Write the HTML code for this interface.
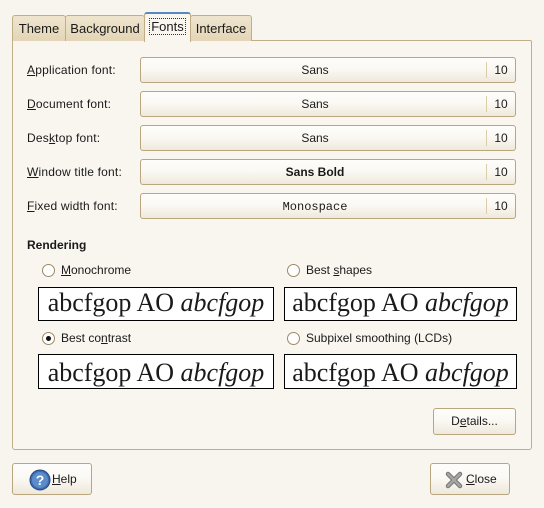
<!DOCTYPE html>
<html><head><style>
*{box-sizing:border-box;margin:0;padding:0}
body{width:544px;height:508px;background:#f8f5ef;font-family:"Liberation Sans",sans-serif;font-size:12px;color:#1a1a1a;position:relative;overflow:hidden}
.a{position:absolute}
.tab{position:absolute;top:15px;height:26px;border:1px solid #c2ae86;border-bottom:none;border-radius:3px 3px 0 0;background:linear-gradient(#efe5cf,#e3d5b6);text-align:center;line-height:26px;font-size:13px}
.panel{position:absolute;left:12px;top:40px;width:520px;height:410px;border:1px solid #c2ae86;border-radius:0 2px 3px 3px;background:#f9f6f0}
.btn{position:absolute;border:1px solid #b9a67f;border-radius:3px;background:linear-gradient(#fefdfb 0%,#fbf9f4 45%,#efe9dc 100%);text-align:center;font-size:12px}
.lbl{position:absolute;left:27px;font-size:12px;letter-spacing:0.2px}
.num{position:absolute;right:0;top:4px;width:29px;height:16px;border-left:1px solid #dccdaa;line-height:16px;text-align:center}
.radio{position:absolute;width:13px;height:13px;border:1px solid #9c8a66;border-radius:50%;background:#fff}
.prev{position:absolute;border:1px solid #000;background:#fff;font-family:"Liberation Serif",serif;font-size:26px;text-align:center;line-height:30px;white-space:nowrap}
u{text-decoration:underline}
</style></head><body>
<div class="panel"></div>
<div class="tab" style="left:12px;width:54px">Theme</div>
<div class="tab" style="left:65px;width:80px">Background</div>
<div class="tab" style="left:190px;width:62px">Interface</div>
<div class="tab" style="left:144px;top:12px;width:47px;height:30px;background:#f9f6f0;border-top:2px solid #5a87c2;line-height:26px"><span style="border:1px dotted #333;padding:0 1px">Fonts</span></div>

<div class="lbl" style="top:63px"><u>A</u>pplication font:</div>
<div class="lbl" style="top:97px"><u>D</u>ocument font:</div>
<div class="lbl" style="top:131px">Des<u>k</u>top font:</div>
<div class="lbl" style="top:165px"><u>W</u>indow title font:</div>
<div class="lbl" style="top:199px"><u>F</u>ixed width font:</div>

<div class="btn" style="left:140px;top:57px;width:376px;height:26px;line-height:24px"><span style="margin-right:26px">Sans</span><div class="num">10</div></div>
<div class="btn" style="left:140px;top:91px;width:376px;height:26px;line-height:24px"><span style="margin-right:26px">Sans</span><div class="num">10</div></div>
<div class="btn" style="left:140px;top:125px;width:376px;height:26px;line-height:24px"><span style="margin-right:26px">Sans</span><div class="num">10</div></div>
<div class="btn" style="left:140px;top:159px;width:376px;height:26px;line-height:24px"><b style="margin-right:26px">Sans Bold</b><div class="num">10</div></div>
<div class="btn" style="left:140px;top:193px;width:376px;height:26px;line-height:24px"><span style="margin-right:26px;font-family:'Liberation Mono',monospace">Monospace</span><div class="num">10</div></div>

<div class="a" style="left:27px;top:238px;font-weight:bold">Rendering</div>
<div class="radio" style="left:42px;top:264px"></div>
<div class="a" style="left:61px;top:263px"><u>M</u>onochrome</div>
<div class="radio" style="left:287px;top:264px"></div>
<div class="a" style="left:306px;top:263px">Best <u>s</u>hapes</div>
<div class="prev" style="left:38px;top:287px;width:236px;height:34px">abcfgop AO <i>abcfgop</i></div>
<div class="prev" style="left:284px;top:287px;width:233px;height:34px">abcfgop AO <i>abcfgop</i></div>
<div class="radio" style="left:42px;top:332px"><div style="position:absolute;left:3px;top:3px;width:5px;height:5px;border-radius:50%;background:#111"></div></div>
<div class="a" style="left:61px;top:331px">Best co<u>n</u>trast</div>
<div class="radio" style="left:287px;top:332px"></div>
<div class="a" style="left:306px;top:331px">Subpixel smoothing (LCDs)</div>
<div class="prev" style="left:38px;top:354px;width:236px;height:35px;line-height:36px">abcfgop AO <i>abcfgop</i></div>
<div class="prev" style="left:284px;top:354px;width:233px;height:35px;line-height:36px">abcfgop AO <i>abcfgop</i></div>

<div class="btn" style="left:433px;top:408px;width:83px;height:27px;line-height:25px">D<u>e</u>tails...</div>

<div class="btn" style="left:12px;top:463px;width:80px;height:32px">
<svg class="a" style="left:16px;top:5px" width="22" height="22" viewBox="0 0 22 22"><circle cx="11" cy="11" r="10" fill="#3d6db0" stroke="#24467e"/><circle cx="11" cy="11" r="8" fill="#5b8ccb"/><text x="11" y="16" text-anchor="middle" font-family="Liberation Sans" font-weight="bold" font-size="14" fill="#fff">?</text></svg>
<span class="a" style="left:39px;top:8px"><u>H</u>elp</span></div>
<div class="btn" style="left:430px;top:463px;width:80px;height:32px">
<svg class="a" style="left:14px;top:7px" width="18" height="18" viewBox="0 0 18 18"><path d="M3 3L15 15M15 3L3 15" stroke="#7d7d7d" stroke-width="4.5" stroke-linecap="round"/><path d="M3 3L15 15M15 3L3 15" stroke="#a8a8a8" stroke-width="2" stroke-linecap="round"/></svg>
<span class="a" style="left:35px;top:8px"><u>C</u>lose</span></div>
</body></html>
